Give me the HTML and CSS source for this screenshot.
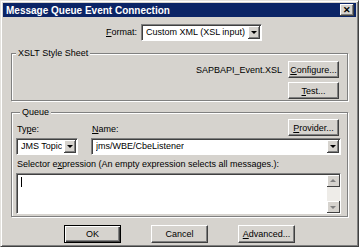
FILE: index.html
```html
<!DOCTYPE html>
<html lang="en">
<head>
  <meta charset="UTF-8">
  <title>Message Queue Event Connection</title>
  <link rel="stylesheet" href="styles.css">
</head>
<body>
  <div class="window">
    <div class="titlebar">
      <span class="title">Message Queue Event Connection</span>
      <span class="close">&#x2715;</span>
    </div>

    <div class="content">
      <!-- Format -->
      <div class="format-row">
        <span class="label"><u>F</u>ormat:</span>
        <div class="combo combo-format">
          <span class="combo-text">Custom XML (XSL input)</span>
          <span class="drop"></span>
        </div>
      </div>

      <!-- XSLT -->
      <fieldset class="group group-xslt">
        <legend>XSLT Style Sheet</legend>
        <div class="xslt-row">
          <span class="file">SAPBAPI_Event.XSL</span>
          <button class="btn"><u>C</u>onfigure...</button>
        </div>
        <div class="xslt-row">
          <button class="btn"><u>T</u>est...</button>
        </div>
      </fieldset>

      <!-- Queue -->
      <fieldset class="group group-queue">
        <legend>Queue</legend>
        <div class="queue-labels">
          <span class="label label-type">Ty<u>p</u>e:</span>
          <span class="label label-name"><u>N</u>ame:</span>
          <button class="btn"><u>P</u>rovider...</button>
        </div>
        <div class="queue-combos">
          <div class="combo combo-type">
            <span class="combo-text">JMS Topic</span>
            <span class="drop"></span>
          </div>
          <div class="combo combo-name">
            <span class="combo-text">jms/WBE/CbeListener</span>
            <span class="drop"></span>
          </div>
        </div>
        <div class="label selector-label">Selector e<u>x</u>pression (An empty expression selects all messages.):</div>
        <div class="memo">
          <div class="memo-text"><span class="caret"></span></div>
          <div class="vscroll">
            <span class="sb-btn sb-up"></span>
            <span class="sb-track"></span>
            <span class="sb-btn sb-down"></span>
          </div>
        </div>
      </fieldset>

      <!-- Buttons -->
      <div class="actions">
        <button class="btn btn-default">OK</button>
        <button class="btn">Cancel</button>
        <button class="btn"><u>A</u>dvanced...</button>
      </div>
    </div>
  </div>
</body>
</html>
```

FILE: styles.css
```css
* {
  margin: 0;
  padding: 0;
  box-sizing: border-box;
  font-family: 'Liberation Sans', Arial, sans-serif;
}

body {
  background: #d4d0c8;
  font-size: 9px;
  line-height: 11px;
  color: #000;
}

.window {
  width: 359px;
  height: 247px;
  background: #d6d3ce;
  border: 1px solid;
  border-color: #e4e2de #404040 #404040 #e4e2de;
  box-shadow: inset 1px 1px 0 #fff, inset -1px -1px 0 #808080;
  padding: 2px;
}

/* Title bar */
.titlebar {
  height: 14px;
  background: #0b2466;
  display: flex;
  align-items: center;
  justify-content: space-between;
  padding: 0 2px 0 3px;
}

.title {
  color: #fff;
  font-weight: bold;
  font-size: 10px;
}

.close {
  width: 14px;
  height: 12px;
  background: #d6d3ce;
  box-shadow: inset -1px -1px 0 #404040, inset 1px 1px 0 #fff, inset -2px -2px 0 #808080;
  font-size: 9px;
  line-height: 12px;
  font-weight: bold;
  text-align: center;
  color: #000;
}

.content {
  padding: 0 8px;
}

u {
  text-decoration: underline;
}

/* Format row */
.format-row {
  display: flex;
  align-items: center;
  margin-top: 7px;
  padding-left: 95px;
  gap: 4px;
}

/* Combo boxes */
.combo {
  height: 17px;
  background: #fff;
  border: 1px solid;
  border-color: #808080 #fff #fff #808080;
  box-shadow: inset 1px 1px 0 #404040;
  display: flex;
  align-items: center;
  justify-content: space-between;
  padding: 1px 1px 1px 4px;
}

.combo-format {
  width: 121px;
}

.combo-text {
  white-space: nowrap;
  overflow: hidden;
}

.drop {
  width: 12px;
  height: 13px;
  background: #d6d3ce;
  box-shadow: inset -1px -1px 0 #404040, inset 1px 1px 0 #fff, inset -2px -2px 0 #808080;
  position: relative;
  flex-shrink: 0;
}

.drop::after {
  content: '';
  position: absolute;
  left: 3px;
  top: 5px;
  border-left: 3px solid transparent;
  border-right: 3px solid transparent;
  border-top: 3px solid #000;
}

/* Group boxes */
.group {
  border: 1px solid #808080;
  box-shadow: 1px 1px 0 #fff, inset 1px 1px 0 #fff;
  min-inline-size: 0;
}

.group legend {
  margin-left: 4px;
  padding: 0 2px;
  background: #d6d3ce;
}

.group-xslt {
  margin-top: 7px;
  padding: 2px 8px 1px 0;
}

.xslt-row {
  display: flex;
  justify-content: flex-end;
  align-items: center;
  gap: 6px;
}

.xslt-row + .xslt-row {
  margin-top: 4px;
}

.file {
  padding-top: 1px;
}

/* Buttons */
.btn {
  width: 51px;
  height: 17px;
  background: #d6d3ce;
  border: 1px solid;
  border-color: #fff #404040 #404040 #fff;
  box-shadow: inset -1px -1px 0 #808080;
  font-size: 9px;
  color: #000;
  cursor: pointer;
}

.btn-default {
  border: 1px solid #000;
  box-shadow: inset 1px 1px 0 #fff, inset -1px -1px 0 #404040, inset -2px -2px 0 #808080;
}

/* Queue */
.group-queue {
  margin-top: 6px;
  padding: 1px 6px 2px 4px;
}

.queue-labels {
  display: flex;
  align-items: center;
}

.queue-labels .btn {
  margin-left: auto;
  margin-right: 2px;
}

.label-type {
  width: 76px;
  padding-left: 1px;
  padding-top: 3px;
}

.label-name {
  padding-top: 3px;
}

.queue-combos {
  display: flex;
  gap: 13px;
  margin-top: 2px;
}

.combo-type {
  width: 62px;
}

.combo-name {
  flex: 1;
}

.selector-label {
  margin-top: 4px;
  padding-left: 1px;
  white-space: nowrap;
}

.memo {
  height: 41px;
  margin-top: 3px;
  background: #fff;
  border: 1px solid;
  border-color: #808080 #fff #fff #808080;
  box-shadow: inset 1px 1px 0 #404040;
  display: flex;
  padding: 1px 0 0 1px;
}

.memo-text {
  flex: 1;
  padding: 2px 3px;
}

.caret {
  display: block;
  width: 1px;
  height: 10px;
  background: #000;
}

.vscroll {
  width: 13px;
  display: flex;
  flex-direction: column;
  background: #eeece8;
}

.sb-track {
  flex: 1;
}

.sb-btn {
  height: 12px;
  background: #d6d3ce;
  box-shadow: inset -1px -1px 0 #404040, inset 1px 1px 0 #fff;
  position: relative;
}

.sb-btn::after {
  content: '';
  position: absolute;
  left: 3px;
  border-left: 3px solid transparent;
  border-right: 3px solid transparent;
}

.sb-up::after {
  top: 4px;
  border-bottom: 3px solid #808080;
}

.sb-down::after {
  top: 5px;
  border-top: 3px solid #808080;
}

/* Bottom buttons */
.actions {
  display: flex;
  justify-content: center;
  gap: 30px;
  margin-top: 8px;
}

.actions .btn {
  width: 57px;
  height: 18px;
}
```
